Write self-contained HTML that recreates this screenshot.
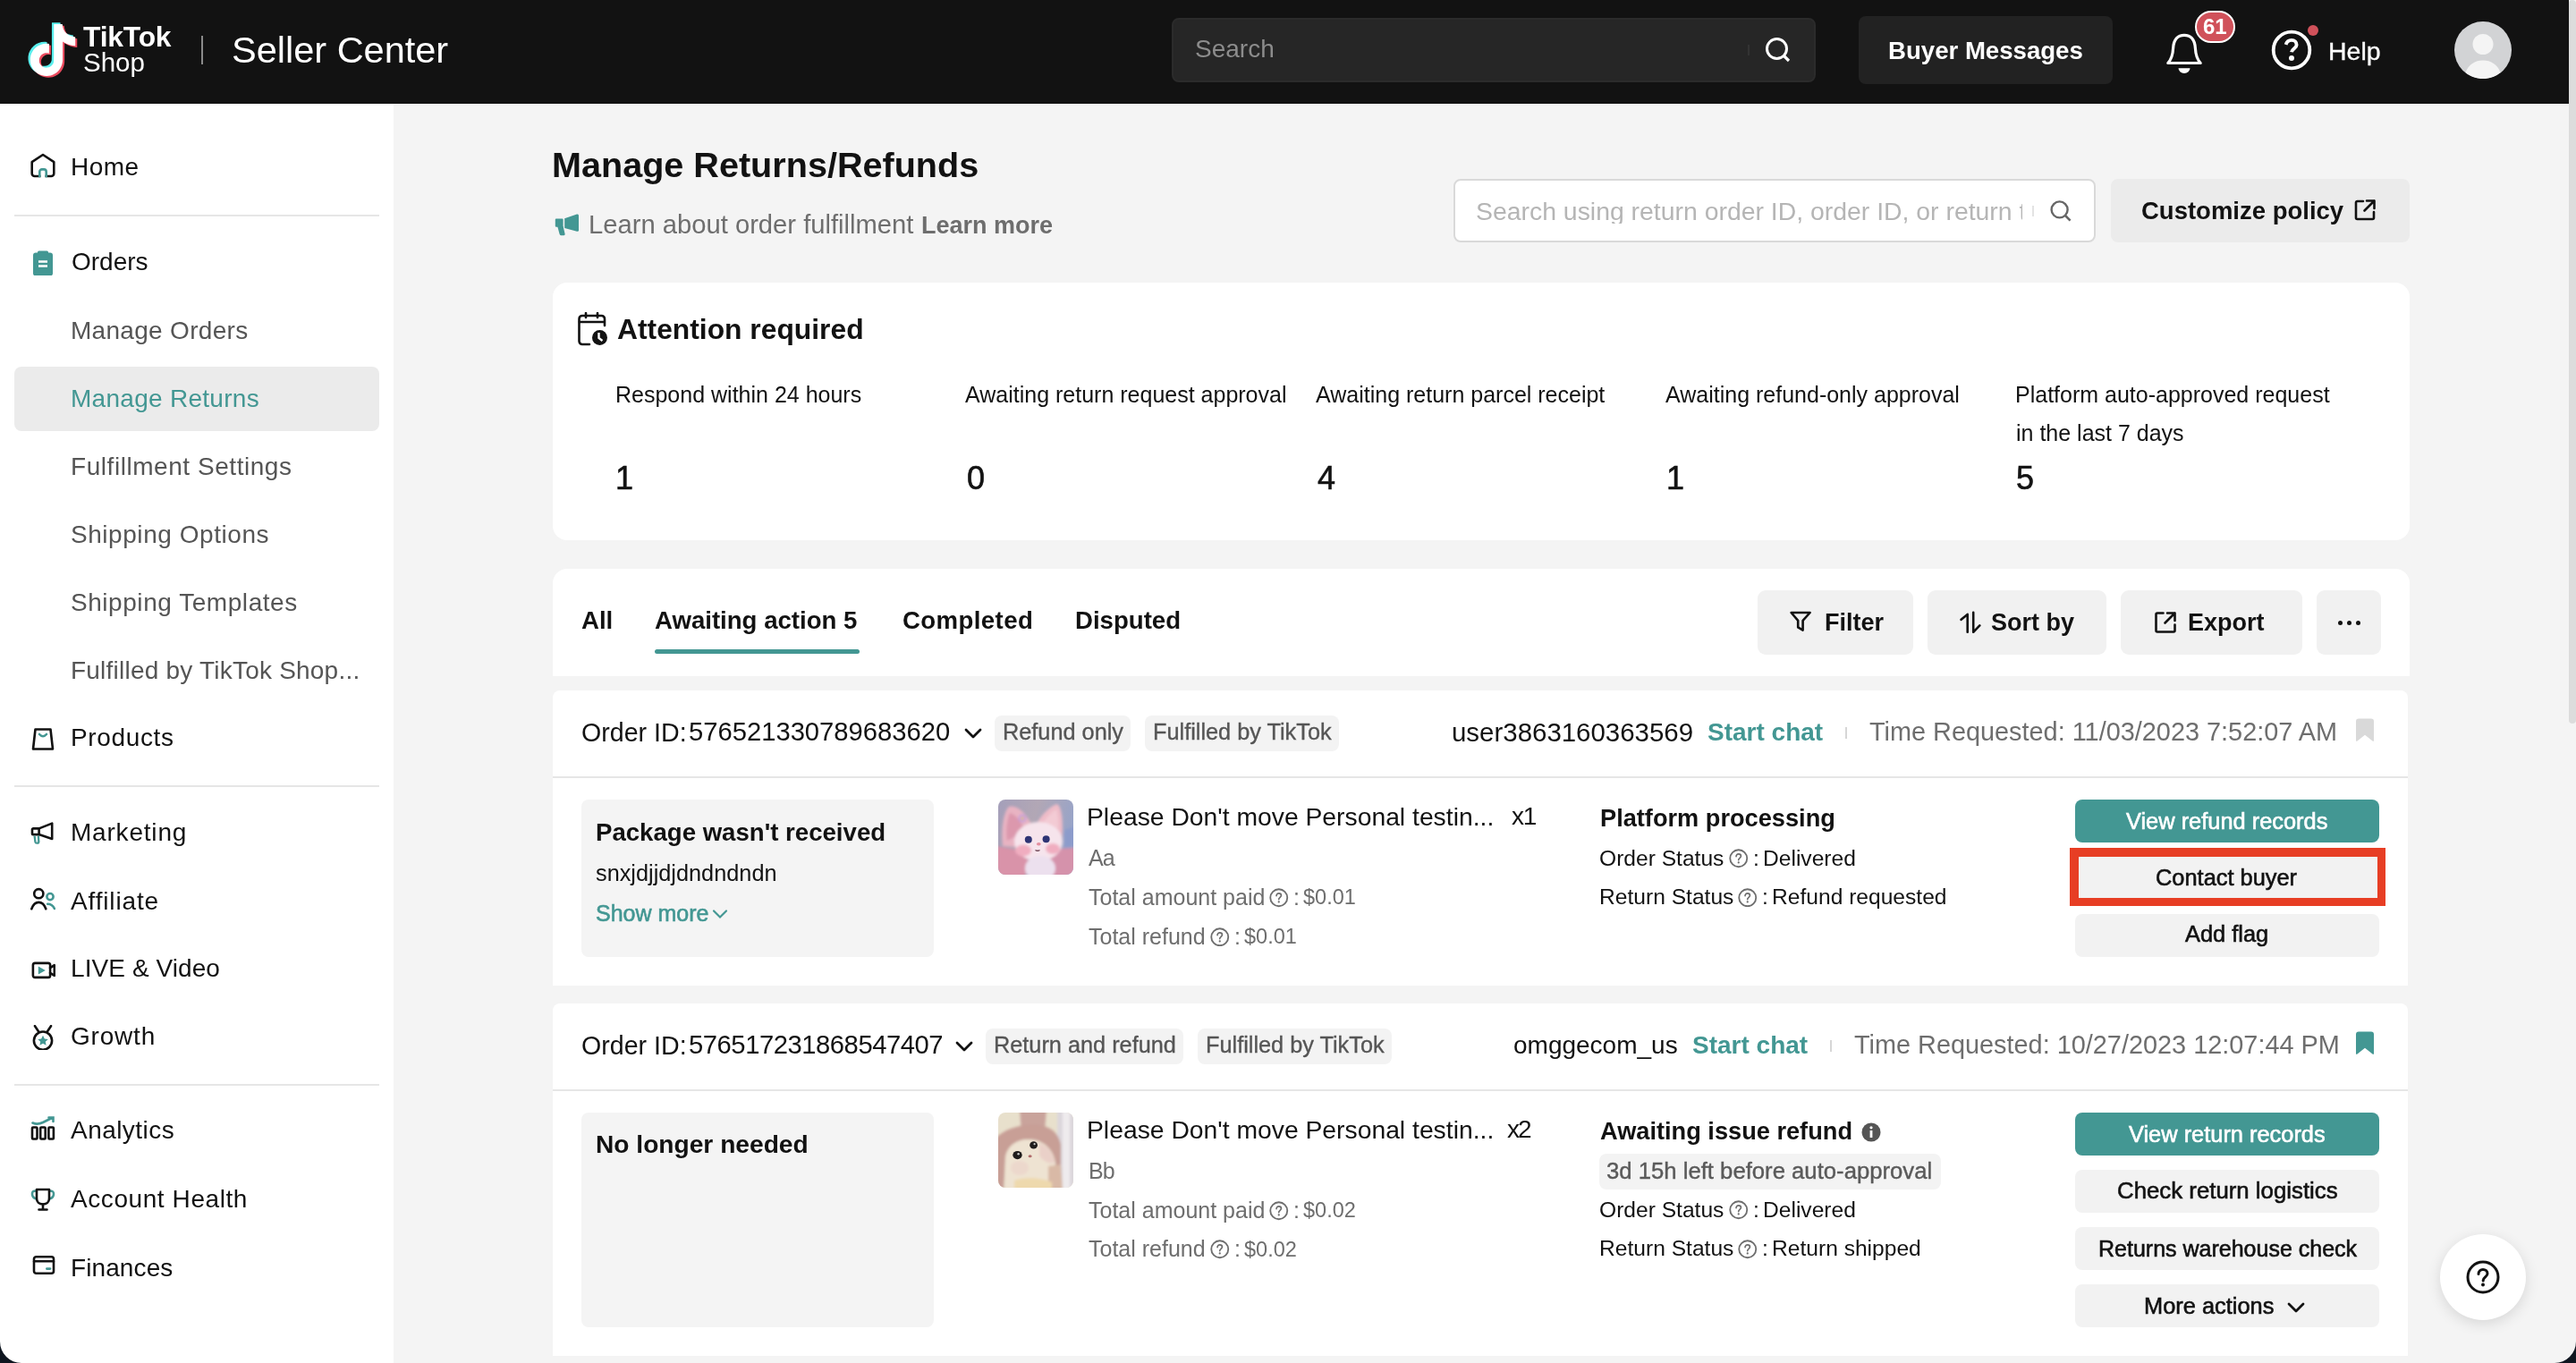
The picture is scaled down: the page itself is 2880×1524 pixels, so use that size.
<!DOCTYPE html>
<html><head><meta charset="utf-8"><title>Manage Returns/Refunds</title>
<style>
html,body{margin:0;padding:0;}
body{width:2880px;height:1524px;position:relative;overflow:hidden;background:#f4f4f4;font-family:"Liberation Sans",sans-serif;}
.t{position:absolute;white-space:nowrap;line-height:1;will-change:transform;}
.b{position:absolute;}
</style></head><body>
<div class="b" style="left:0px;top:0px;width:2872px;height:116px;background:#121212;"></div>
<div class="b" style="left:2872px;top:0px;width:8px;height:1524px;background:#f4f4f4;"></div>
<div class="b" style="left:2872px;top:0px;width:8px;height:809px;background:#dcdcdc;border-radius:4px;"></div>
<div class="b" style="left:0px;top:116px;width:440px;height:1408px;background:#ffffff;"></div>
<svg class="b" style="left:30px;top:24px;" width="58" height="64" viewBox="0 0 24 24"><path d="M12.525.02c1.31-.02 2.61-.01 3.91-.02.08 1.53.63 3.09 1.75 4.17 1.12 1.11 2.7 1.62 4.24 1.79v4.03c-1.44-.05-2.89-.35-4.2-.97-.57-.26-1.1-.59-1.62-.93-.01 2.92.01 5.84-.02 8.75-.08 1.4-.54 2.79-1.35 3.94-1.31 1.92-3.58 3.17-5.91 3.21-1.43.08-2.86-.31-4.08-1.03-2.02-1.19-3.44-3.37-3.65-5.71-.02-.5-.03-1-.01-1.49.18-1.9 1.12-3.72 2.58-4.96 1.66-1.44 3.98-2.13 6.15-1.72.02 1.48-.04 2.96-.04 4.44-.99-.32-2.15-.23-3.02.37-.63.41-1.11 1.04-1.36 1.75-.21.51-.15 1.07-.14 1.61.24 1.64 1.82 3.02 3.5 2.87 1.12-.01 2.19-.66 2.77-1.61.19-.33.4-.67.41-1.06.1-1.79.06-3.57.07-5.36.01-4.03-.01-8.05.02-12.07z" fill="#5aeeed" transform="translate(-0.95,-0.75)"/><path d="M12.525.02c1.31-.02 2.61-.01 3.91-.02.08 1.53.63 3.09 1.75 4.17 1.12 1.11 2.7 1.62 4.24 1.79v4.03c-1.44-.05-2.89-.35-4.2-.97-.57-.26-1.1-.59-1.62-.93-.01 2.92.01 5.84-.02 8.75-.08 1.4-.54 2.79-1.35 3.94-1.31 1.92-3.58 3.17-5.91 3.21-1.43.08-2.86-.31-4.08-1.03-2.02-1.19-3.44-3.37-3.65-5.71-.02-.5-.03-1-.01-1.49.18-1.9 1.12-3.72 2.58-4.96 1.66-1.44 3.98-2.13 6.15-1.72.02 1.48-.04 2.96-.04 4.44-.99-.32-2.15-.23-3.02.37-.63.41-1.11 1.04-1.36 1.75-.21.51-.15 1.07-.14 1.61.24 1.64 1.82 3.02 3.5 2.87 1.12-.01 2.19-.66 2.77-1.61.19-.33.4-.67.41-1.06.1-1.79.06-3.57.07-5.36.01-4.03-.01-8.05.02-12.07z" fill="#ea4a5e" transform="translate(0.85,0.75)"/><path d="M12.525.02c1.31-.02 2.61-.01 3.91-.02.08 1.53.63 3.09 1.75 4.17 1.12 1.11 2.7 1.62 4.24 1.79v4.03c-1.44-.05-2.89-.35-4.2-.97-.57-.26-1.1-.59-1.62-.93-.01 2.92.01 5.84-.02 8.75-.08 1.4-.54 2.79-1.35 3.94-1.31 1.92-3.58 3.17-5.91 3.21-1.43.08-2.86-.31-4.08-1.03-2.02-1.19-3.44-3.37-3.65-5.71-.02-.5-.03-1-.01-1.49.18-1.9 1.12-3.72 2.58-4.96 1.66-1.44 3.98-2.13 6.15-1.72.02 1.48-.04 2.96-.04 4.44-.99-.32-2.15-.23-3.02.37-.63.41-1.11 1.04-1.36 1.75-.21.51-.15 1.07-.14 1.61.24 1.64 1.82 3.02 3.5 2.87 1.12-.01 2.19-.66 2.77-1.61.19-.33.4-.67.41-1.06.1-1.79.06-3.57.07-5.36.01-4.03-.01-8.05.02-12.07z" fill="#fff"/></svg>
<div class="t" style="left:92.5px;top:26.1px;font-size:31.8px;color:#fff;font-weight:700;letter-spacing:-0.2px;">TikTok</div>
<div class="t" style="left:93.0px;top:55.0px;font-size:29.5px;color:#fff;">Shop</div>
<div class="b" style="left:225px;top:40px;width:2px;height:32px;background:#8a8a8a;"></div>
<div class="t" style="left:259.0px;top:35.3px;font-size:41.5px;color:#fff;">Seller Center</div>
<div class="b" style="left:1310px;top:20px;width:720px;height:72px;background:#262626;border-radius:8px;box-sizing:border-box;border:2px solid #2b2b2b;"></div>
<div class="t" style="left:1336.0px;top:41.3px;font-size:28px;color:#8c8c8c;">Search</div>
<div class="b" style="left:1954px;top:50px;width:2px;height:12px;background:#333;"></div>
<svg class="b" style="left:1970px;top:38px;" width="34" height="34" viewBox="0 0 34 34"><circle cx="16.5" cy="16.5" r="11" fill="none" stroke="#fff" stroke-width="3"/><path d="M24.5 24.5 L30 30" stroke="#fff" stroke-width="3.2"/></svg>
<div class="b" style="left:2078px;top:18px;width:284px;height:76px;background:#222222;border-radius:8px;"></div>
<div class="t" style="left:2111.0px;top:43.1px;font-size:27.6px;color:#fff;font-weight:700;">Buyer Messages</div>
<svg class="b" style="left:2418px;top:34px;" width="48" height="52" viewBox="0 0 48 52"><path d="M5.8 36.5 C9.5 32.5 11.2 28.5 11.6 20 C12.1 10 17 5.3 24 5.3 C31 5.3 35.9 10 36.4 20 C36.8 28.5 38.5 32.5 42.2 36.5 Z" fill="none" stroke="#fff" stroke-width="3.2" stroke-linejoin="round"/><path d="M17.5 42.3 h13 a6.5 5.6 0 0 1 -13 0z" fill="#fff"/></svg>
<div class="b" style="left:2454px;top:12px;width:45px;height:36px;background:#d0515a;border-radius:18px;box-sizing:border-box;border:2px solid #fff;"></div>
<div class="t" style="left:2462.5px;top:17.7px;font-size:24px;color:#fff;font-weight:700;">61</div>
<svg class="b" style="left:2536px;top:30px;" width="52" height="52" viewBox="0 0 52 52"><circle cx="26" cy="26" r="20.3" fill="none" stroke="#fff" stroke-width="3.8"/><path d="M19.6 19.8 C20.6 16.7 23 14.9 26 14.9 C29.4 14.9 31.6 17.2 31.6 20.2 C31.6 23.8 26.6 24.4 26 28.2" fill="none" stroke="#fff" stroke-width="3.9"/><circle cx="26" cy="34.9" r="3" fill="#fff"/></svg>
<div class="b" style="left:2580px;top:28px;width:12px;height:12px;background:#d0515a;border-radius:6px;"></div>
<div class="t" style="left:2603.0px;top:42.9px;font-size:28.5px;color:#fff;-webkit-text-stroke:0.3px #fff;">Help</div>
<svg class="b" style="left:2744px;top:24px;" width="64" height="64" viewBox="0 0 64 64"><circle cx="32" cy="32" r="32" fill="#d2d3d5"/><circle cx="32" cy="25.5" r="11.5" fill="#f4f4f4"/><path d="M12.5 57 C16 48 23 43.5 32 43.5 C41 43.5 48 48 51.5 57 C46 61.5 39.5 64 32 64 C24.5 64 18 61.5 12.5 57Z" fill="#f4f4f4"/></svg>
<svg class="b" style="left:34px;top:171px;" width="28" height="28" viewBox="0 0 28 28"><path d="M1.7 10.2 L14 2 L26.3 10.2 V23 a3 3 0 0 1 -3 3 H4.7 a3 3 0 0 1 -3 -3 Z" fill="none" stroke="#121212" stroke-width="2.6" stroke-linejoin="round" stroke-linecap="round"/><rect x="11.4" y="23.5" width="5.2" height="4.5" fill="#fff"/><path d="M10.3 27.2 V21 a2.6 2.6 0 0 1 2.6 -2.6 H15.1 a2.6 2.6 0 0 1 2.6 2.6 V27.2" fill="none" stroke="#439793" stroke-width="2.6"/></svg>
<div class="t" style="left:79.3px;top:173.3px;font-size:28px;color:#121212;letter-spacing:0.5px;">Home</div>
<div class="b" style="left:16px;top:240px;width:408px;height:2px;background:#e6e6e6;"></div>
<svg class="b" style="left:34px;top:280px;" width="28" height="28" viewBox="0 0 28 28"><rect x="3" y="2.5" width="22" height="26" rx="3" fill="#439793"/><rect x="8" y="0.5" width="12" height="4" rx="1.5" fill="#439793"/><path d="M9 12.5 h10 M9 17.5 h10" stroke="#fff" stroke-width="2.4"/></svg>
<div class="t" style="left:79.8px;top:279.3px;font-size:28px;color:#121212;">Orders</div>
<div class="t" style="left:79.3px;top:355.8px;font-size:28px;color:#555555;letter-spacing:0.3px;">Manage Orders</div>
<div class="b" style="left:16px;top:410px;width:408px;height:72px;background:#ebebeb;border-radius:8px;"></div>
<div class="t" style="left:79.3px;top:432.1px;font-size:28px;color:#439793;letter-spacing:0.28px;">Manage Returns</div>
<div class="t" style="left:79.3px;top:508.1px;font-size:28px;color:#555555;letter-spacing:0.55px;">Fulfillment Settings</div>
<div class="t" style="left:79.3px;top:584.0px;font-size:28px;color:#555555;letter-spacing:0.55px;">Shipping Options</div>
<div class="t" style="left:79.3px;top:659.6px;font-size:28px;color:#555555;letter-spacing:0.55px;">Shipping Templates</div>
<div class="t" style="left:79.3px;top:735.6px;font-size:28px;color:#555555;letter-spacing:0.22px;">Fulfilled by TikTok Shop...</div>
<svg class="b" style="left:34px;top:812px;" width="28" height="28" viewBox="0 0 28 28"><path d="M5.5 3.5 H22.5 L25 25.5 H3 Z" fill="none" stroke="#121212" stroke-width="2.6" stroke-linejoin="round" stroke-linecap="round"/><path d="M10 9 Q14 13.5 18 9" fill="none" stroke="#439793" stroke-width="2.6" stroke-linecap="round"/></svg>
<div class="t" style="left:79.3px;top:810.9px;font-size:28px;color:#121212;letter-spacing:0.65px;">Products</div>
<div class="b" style="left:16px;top:878px;width:408px;height:2px;background:#e6e6e6;"></div>
<svg class="b" style="left:34px;top:917px;" width="28" height="28" viewBox="0 0 28 28"><path d="M3.2 9.4 H9.6 L24.2 3.6 V21 L9.6 16.1 H3.2 a1.2 1.2 0 0 1 -1.2 -1.2 V10.6 a1.2 1.2 0 0 1 1.2 -1.2Z" fill="none" stroke="#121212" stroke-width="2.6" stroke-linejoin="round" stroke-linecap="round"/><path d="M9.6 9.4 V16.1" fill="none" stroke="#121212" stroke-width="2.6" stroke-linejoin="round" stroke-linecap="round"/><path d="M4.6 17.6 L5.4 24.2 Q5.7 25.7 7.1 25.7 H7.9 Q9.5 25.7 9.3 24 L8.9 17.6" fill="none" stroke="#439793" stroke-width="2.3" stroke-linejoin="round"/></svg>
<div class="t" style="left:79.3px;top:917.3px;font-size:28px;color:#121212;letter-spacing:0.8px;">Marketing</div>
<svg class="b" style="left:34px;top:991px;" width="28" height="28" viewBox="0 0 28 28"><circle cx="9.3" cy="8.2" r="5.1" fill="none" stroke="#121212" stroke-width="2.6" stroke-linejoin="round" stroke-linecap="round"/><path d="M1.3 25.2 C3 20.6 6 17.9 9.3 17.9 C12.6 17.9 15.6 20.6 17.3 25.2" fill="none" stroke="#121212" stroke-width="2.6" stroke-linejoin="round" stroke-linecap="round"/><circle cx="22" cy="11.6" r="3.6" fill="none" stroke="#439793" stroke-width="2.6" stroke-linecap="round"/><path d="M19.2 19.7 C22.6 19.7 25.4 21.6 26.9 25" fill="none" stroke="#439793" stroke-width="2.6" stroke-linecap="round"/></svg>
<div class="t" style="left:79.3px;top:993.9px;font-size:28px;color:#121212;letter-spacing:0.85px;">Affiliate</div>
<svg class="b" style="left:34px;top:1071px;" width="28" height="28" viewBox="0 0 28 28"><rect x="2.9" y="5.9" width="19.2" height="16" rx="2.2" fill="none" stroke="#121212" stroke-width="2.6" stroke-linejoin="round" stroke-linecap="round"/><path d="M22.1 11.2 L26.8 8.2 V19.8 L22.1 16.8" fill="none" stroke="#121212" stroke-width="2.6" stroke-linejoin="round" stroke-linecap="round"/><path d="M8.8 9.6 L16.8 14 L8.8 18.4 Z" fill="#439793"/></svg>
<div class="t" style="left:79.3px;top:1069.3px;font-size:28px;color:#121212;letter-spacing:0.08px;">LIVE &amp; Video</div>
<svg class="b" style="left:34px;top:1146px;" width="28" height="28" viewBox="0 0 28 28"><path d="M5 1.2 L9 7.2 M23 1.2 L19 7.2" fill="none" stroke="#121212" stroke-width="2.6" stroke-linejoin="round" stroke-linecap="round" stroke-width="2.8"/><circle cx="14" cy="17.6" r="10.1" fill="none" stroke="#121212" stroke-width="2.6" stroke-linejoin="round" stroke-linecap="round"/><g transform="translate(0,1.2)"><path d="M14 10.5 L15.8 14.3 L19.8 14.8 L16.8 17.5 L17.6 21.5 L14 19.5 L10.4 21.5 L11.2 17.5 L8.2 14.8 L12.2 14.3 Z" fill="#439793"/></g></svg>
<div class="t" style="left:79.3px;top:1145.3px;font-size:28px;color:#121212;letter-spacing:0.8px;">Growth</div>
<div class="b" style="left:16px;top:1212px;width:408px;height:2px;background:#e6e6e6;"></div>
<svg class="b" style="left:34px;top:1248px;" width="28" height="28" viewBox="0 0 28 28"><path d="M2.5 7.5 Q8 10 14 7 Q19 4.5 25 1.5 M20.5 1.5 H25.5 V6" fill="none" stroke="#439793" stroke-width="2.6" stroke-linecap="round"/><rect x="2" y="12.5" width="5.5" height="13" rx="1" fill="none" stroke="#121212" stroke-width="2.6" stroke-linejoin="round" stroke-linecap="round"/><rect x="11.2" y="12.5" width="5.5" height="13" rx="1" fill="none" stroke="#121212" stroke-width="2.6" stroke-linejoin="round" stroke-linecap="round"/><rect x="20.4" y="12.5" width="5.5" height="13" rx="1" fill="none" stroke="#121212" stroke-width="2.6" stroke-linejoin="round" stroke-linecap="round"/></svg>
<div class="t" style="left:79.3px;top:1250.3px;font-size:28px;color:#121212;letter-spacing:0.45px;">Analytics</div>
<svg class="b" style="left:34px;top:1328px;" width="28" height="28" viewBox="0 0 28 28"><path d="M6.5 3.5 C3 3.5 2 4.5 2 7 C2 10 3.5 11.5 6.5 12.5 M21.5 3.5 C25 3.5 26 4.5 26 7 C26 10 24.5 11.5 21.5 12.5" fill="none" stroke="#439793" stroke-width="2.6" stroke-linecap="round"/><path d="M7 2 H21 V12 C21 16 18 18.5 14 18.5 C10 18.5 7 16 7 12 Z" fill="none" stroke="#121212" stroke-width="2.6" stroke-linejoin="round" stroke-linecap="round"/><path d="M14 18.5 V24.5 M9.5 24.5 H18.5" fill="none" stroke="#121212" stroke-width="2.6" stroke-linejoin="round" stroke-linecap="round"/></svg>
<div class="t" style="left:79.3px;top:1327.0px;font-size:28px;color:#121212;letter-spacing:0.58px;">Account Health</div>
<svg class="b" style="left:34px;top:1401px;" width="28" height="28" viewBox="0 0 28 28"><rect x="4" y="4.3" width="22" height="18.4" rx="2.5" fill="none" stroke="#121212" stroke-width="2.6" stroke-linejoin="round" stroke-linecap="round"/><path d="M4.2 9.2 H25.8" fill="none" stroke="#121212" stroke-width="2.6" stroke-linejoin="round" stroke-linecap="round"/><path d="M18.3 17.6 H22" fill="none" stroke="#439793" stroke-width="2.6" stroke-linecap="round"/></svg>
<div class="t" style="left:79.3px;top:1403.5px;font-size:28px;color:#121212;letter-spacing:0.1px;">Finances</div>
<div class="t" style="left:616.8px;top:165.0px;font-size:39.6px;color:#121212;font-weight:700;">Manage Returns/Refunds</div>
<svg class="b" style="left:619px;top:238px;" width="30" height="28" viewBox="0 0 30 28"><path d="M2.8 6.4 H9.6 a1 1 0 0 1 1 1 V15.8 H2.8 a1 1 0 0 1 -1 -1 V7.4 a1 1 0 0 1 1 -1Z" fill="#439793"/><path d="M4.2 15 H10.6 L12.6 23.6 Q12.8 25.2 11 25.2 H8.2 Q6.9 25.2 6.6 23.8 Z" fill="#439793"/><path d="M12.2 6.3 L26 1.6 Q28 1.1 28 3.2 V19.2 Q28 21.2 26 20.7 L12.2 16.9 Z" fill="#439793"/></svg>
<div class="t" style="left:657.5px;top:237.1px;font-size:29.2px;color:#6e6e6e;">Learn about order fulfillment</div>
<div class="t" style="left:1029.5px;top:238.9px;font-size:27px;color:#6e6e6e;font-weight:700;">Learn more</div>
<div class="b" style="left:1625px;top:200px;width:718px;height:71px;background:#ffffff;border-radius:8px;box-sizing:border-box;border:2px solid #d9d9d9;"></div>
<div class="t" style="left:1649.5px;top:222.0px;font-size:28.4px;color:#b5b5b5;width:611px;overflow:hidden;">Search using return order ID, order ID, or return t</div>
<div class="b" style="left:2272px;top:230px;width:2px;height:12px;background:#e3e3e3;"></div>
<svg class="b" style="left:2288px;top:222px;" width="30" height="30" viewBox="0 0 30 30"><circle cx="14.6" cy="12.4" r="9" fill="none" stroke="#666" stroke-width="2.4"/><path d="M21 19 L26.6 24.6" stroke="#666" stroke-width="2.6"/></svg>
<div class="b" style="left:2360px;top:200px;width:334px;height:71px;background:#ebebeb;border-radius:8px;"></div>
<div class="t" style="left:2393.5px;top:221.7px;font-size:27.5px;color:#121212;font-weight:700;">Customize policy</div>
<svg class="b" style="left:2631px;top:222px;" width="26" height="26" viewBox="0 0 26 26"><path d="M11 3 H4.5 a1.5 1.5 0 0 0 -1.5 1.5 V21.5 a1.5 1.5 0 0 0 1.5 1.5 H21.5 a1.5 1.5 0 0 0 1.5 -1.5 V15" fill="none" stroke="#121212" stroke-width="2.6" stroke-linejoin="round" stroke-linecap="round"/><path d="M15 2.5 H23.5 V11 M23.5 2.5 L12.5 13.5" fill="none" stroke="#121212" stroke-width="2.6" stroke-linejoin="round" stroke-linecap="round"/></svg>
<div class="b" style="left:618px;top:316px;width:2076px;height:288px;background:#ffffff;border-radius:16px;"></div>
<svg class="b" style="left:645px;top:349px;" width="36" height="38" viewBox="0 0 36 38"><path d="M14 36 H6 a3.5 3.5 0 0 1 -3.5 -3.5 V7.5 a3.5 3.5 0 0 1 3.5 -3.5 H27.5 a3.5 3.5 0 0 1 3.5 3.5 V15" fill="none" stroke="#121212" stroke-width="2.6" stroke-linejoin="round" stroke-linecap="round" stroke-width="3.2"/><path d="M3 11 H30.5 M10 1 V6 M23 1 V6" fill="none" stroke="#121212" stroke-width="2.6" stroke-linejoin="round" stroke-linecap="round" stroke-width="3.2"/><circle cx="25.5" cy="28.5" r="8.5" fill="#121212"/><path d="M24.5 23 V29 L28.5 32" fill="none" stroke="#fff" stroke-width="2.4"/></svg>
<div class="t" style="left:689.8px;top:352.9px;font-size:31.8px;color:#121212;font-weight:700;">Attention required</div>
<div class="t" style="left:688.2px;top:429.2px;font-size:25px;color:#121212;">Respond within 24 hours</div>
<div class="t" style="left:687.5px;top:517.1px;font-size:36px;color:#121212;-webkit-text-stroke:0.6px #121212;">1</div>
<div class="t" style="left:1079.3px;top:429.2px;font-size:25px;color:#121212;">Awaiting return request approval</div>
<div class="t" style="left:1081.1px;top:517.1px;font-size:36px;color:#121212;-webkit-text-stroke:0.6px #121212;">0</div>
<div class="t" style="left:1470.9px;top:429.2px;font-size:25px;color:#121212;">Awaiting return parcel receipt</div>
<div class="t" style="left:1473.4px;top:517.1px;font-size:36px;color:#121212;-webkit-text-stroke:0.6px #121212;">4</div>
<div class="t" style="left:1862.1px;top:429.2px;font-size:25px;color:#121212;">Awaiting refund-only approval</div>
<div class="t" style="left:1862.8px;top:517.1px;font-size:36px;color:#121212;-webkit-text-stroke:0.6px #121212;">1</div>
<div class="t" style="left:2252.9px;top:429.2px;font-size:25px;color:#121212;">Platform auto-approved request</div>
<div class="t" style="left:2254.4px;top:517.1px;font-size:36px;color:#121212;-webkit-text-stroke:0.6px #121212;">5</div>
<div class="t" style="left:2253.5px;top:471.7px;font-size:25px;color:#121212;">in the last 7 days</div>
<div class="b" style="left:618px;top:636px;width:2076px;height:120px;background:#ffffff;border-radius:16px 16px 0 0;"></div>
<div class="t" style="left:650.0px;top:680.2px;font-size:27.6px;color:#121212;font-weight:700;">All</div>
<div class="t" style="left:731.5px;top:680.2px;font-size:27.6px;color:#121212;font-weight:700;">Awaiting action 5</div>
<div class="t" style="left:1009.0px;top:680.2px;font-size:27.6px;color:#121212;font-weight:700;letter-spacing:0.4px;">Completed</div>
<div class="t" style="left:1202.0px;top:680.2px;font-size:27.6px;color:#121212;font-weight:700;">Disputed</div>
<div class="b" style="left:732px;top:726px;width:229px;height:4.5px;background:#439793;border-radius:2.5px;"></div>
<div class="b" style="left:1965px;top:660px;width:174px;height:72px;background:#f1f1f1;border-radius:9px;"></div>
<div class="b" style="left:2155px;top:660px;width:200px;height:72px;background:#f1f1f1;border-radius:9px;"></div>
<div class="b" style="left:2371px;top:660px;width:203px;height:72px;background:#f1f1f1;border-radius:9px;"></div>
<div class="b" style="left:2590px;top:660px;width:72px;height:72px;background:#f1f1f1;border-radius:9px;"></div>
<svg class="b" style="left:1999px;top:682px;" width="28" height="26" viewBox="0 0 28 26"><path d="M3.6 3 H24.6 L16.6 11.8 V22.6 L11.2 19.4 V11.8 Z" fill="none" stroke="#121212" stroke-width="2.6" stroke-linejoin="round" stroke-linecap="round"/></svg>
<div class="t" style="left:2039.5px;top:682.6px;font-size:27px;color:#121212;font-weight:700;">Filter</div>
<svg class="b" style="left:2190px;top:682px;" width="26" height="26" viewBox="0 0 26 26"><path d="M9.7 24.8 V4.9 L2.6 10.8 M16.2 2.8 V24.8 L23.3 17.4" fill="none" stroke="#121212" stroke-width="2.6" stroke-linejoin="round" stroke-linecap="round"/></svg>
<div class="t" style="left:2225.5px;top:682.6px;font-size:27px;color:#121212;font-weight:700;">Sort by</div>
<svg class="b" style="left:2408px;top:683px;" width="26" height="26" viewBox="0 0 26 26"><path d="M10.5 2.5 H4 a1.5 1.5 0 0 0 -1.5 1.5 V22 a1.5 1.5 0 0 0 1.5 1.5 H22 a1.5 1.5 0 0 0 1.5 -1.5 V15.5" fill="none" stroke="#121212" stroke-width="2.6" stroke-linejoin="round" stroke-linecap="round"/><path d="M15 2.5 H23.5 V11 M23.5 2.5 L12.5 13.5" fill="none" stroke="#121212" stroke-width="2.6" stroke-linejoin="round" stroke-linecap="round"/></svg>
<div class="t" style="left:2446.0px;top:682.6px;font-size:27px;color:#121212;font-weight:700;">Export</div>
<div class="b" style="left:2614px;top:694px;width:5px;height:5px;background:#121212;border-radius:2.5px;"></div>
<div class="b" style="left:2624px;top:694px;width:5px;height:5px;background:#121212;border-radius:2.5px;"></div>
<div class="b" style="left:2634px;top:694px;width:5px;height:5px;background:#121212;border-radius:2.5px;"></div>
<div class="b" style="left:618px;top:772px;width:2074px;height:330px;background:#ffffff;border-radius:8px 8px 0 0;"></div>
<div class="b" style="left:618px;top:868px;width:2074px;height:2px;background:#e6e6e6;"></div>
<div class="t" style="left:649.5px;top:804.9px;font-size:28.6px;color:#121212;">Order ID:</div>
<div class="t" style="left:769.5px;top:804.4px;font-size:29.2px;color:#121212;">576521330789683620</div>
<svg class="b" style="left:1078px;top:813px;" width="20" height="14" viewBox="0 0 20 14"><path d="M2 3 L10 11 L18 3" fill="none" stroke="#121212" stroke-width="2.8" stroke-linecap="round" stroke-linejoin="round"/></svg>
<div class="b" style="left:1112px;top:800px;width:152px;height:40px;background:#f3f3f3;border-radius:8px;"></div>
<div class="t" style="left:1120.5px;top:806.2px;font-size:25.3px;color:#555555;-webkit-text-stroke:0.35px #555555;">Refund only</div>
<div class="b" style="left:1280px;top:800px;width:217px;height:40px;background:#f3f3f3;border-radius:8px;"></div>
<div class="t" style="left:1288.5px;top:806.2px;font-size:25.3px;color:#555555;-webkit-text-stroke:0.35px #555555;">Fulfilled by TikTok</div>
<div class="t" style="left:1622.8px;top:803.8px;font-size:29.45px;color:#121212;">user3863160363569</div>
<div class="t" style="left:1909.0px;top:805.0px;font-size:28px;color:#439793;font-weight:700;">Start chat</div>
<div class="b" style="left:2063px;top:813px;width:2px;height:13px;background:#d6d6d6;"></div>
<div class="t" style="left:2089.5px;top:804.3px;font-size:28.87px;color:#6e6e6e;">Time Requested: 11/03/2023 7:52:07 AM</div>
<svg class="b" style="left:2632.5px;top:803.3px;" width="22" height="27" viewBox="0 0 22 27"><path d="M1 3.5 a3 3 0 0 1 3 -3 H18 a3 3 0 0 1 3 3 V24.8 Q21 26.6 19.5 25.6 L11 18.8 L2.5 25.6 Q1 26.6 1 24.8 Z" fill="#d9d9d9"/></svg>
<div class="b" style="left:650px;top:894px;width:394px;height:176px;background:#f4f4f4;border-radius:8px;"></div>
<div class="t" style="left:666.0px;top:916.5px;font-size:27.6px;color:#121212;font-weight:700;">Package wasn&#x27;t received</div>
<div class="t" style="left:666.0px;top:964.4px;font-size:25.3px;color:#121212;">snxjdjjdjdndndndn</div>
<div class="t" style="left:666.0px;top:1008.8px;font-size:25px;color:#439793;-webkit-text-stroke:0.6px #439793;">Show more</div>
<svg class="b" style="left:796px;top:1016px;" width="18" height="12" viewBox="0 0 18 12"><path d="M2 2.5 L9 9.5 L16 2.5" fill="none" stroke="#439793" stroke-width="2.2" stroke-linecap="round"/></svg>
<svg class="b" style="left:1116px;top:894px;" width="84" height="84" viewBox="0 0 84 84"><defs><clipPath id="c1"><rect width="84" height="84" rx="8"/></clipPath><filter id="bl1" x="-10%" y="-10%" width="120%" height="120%"><feGaussianBlur stdDeviation="1.6"/></filter>
<linearGradient id="g1" x1="0" y1="0" x2="1" y2="0.3"><stop offset="0" stop-color="#a49fba"/><stop offset="0.5" stop-color="#b2a7b5"/><stop offset="1" stop-color="#98a4c8"/></linearGradient></defs>
<g clip-path="url(#c1)"><rect width="84" height="84" fill="url(#g1)"/><g filter="url(#bl1)">
<path d="M74 34 L86 30 L86 52 L74 54Z" fill="#8c9bcb"/>
<path d="M5 52 C3 32 6 14 12 8 C20 5 30 14 37 27 L30 54Z" fill="#e8b3c2"/>
<path d="M10 46 C8 36 10 22 13 15 C20 17 26 25 30 35Z" fill="#dc98ad"/>
<path d="M44 25 C50 15 60 6 66 5 C72 9 73 30 71 47 L56 41Z" fill="#eebcc8"/>
<path d="M49 27 C55 19 61 13 65 11 C68 21 68 34 66 42Z" fill="#f3cbd4"/>
<path d="M-2 52 L20 56 L34 68 L30 86 L-2 86Z" fill="#d993a9"/>
<path d="M86 54 L66 55 L56 68 L60 86 L86 86Z" fill="#d592ab"/>
<ellipse cx="45" cy="47" rx="27" ry="22" fill="#f6e4ec"/>
<ellipse cx="47" cy="77" rx="17" ry="14" fill="#ece0ee"/>
<ellipse cx="28" cy="57" rx="9" ry="6.5" fill="#f0adc0"/><ellipse cx="61" cy="55" rx="8" ry="6" fill="#f0adc0"/>
<circle cx="27" cy="21" r="4.5" fill="#c9a0dc"/><circle cx="27" cy="21" r="1.8" fill="#e9c46a"/>
</g>
<circle cx="33.8" cy="44.8" r="4" fill="#2e3474"/><circle cx="53.6" cy="44.3" r="4" fill="#2e3474"/>
<ellipse cx="45.3" cy="49.8" rx="2.4" ry="1.7" fill="#e48f9f"/><path d="M41.5 56.5 Q44 58 46.5 56.5" stroke="#6a4050" stroke-width="1.3" fill="none"/>
</g></svg>
<div class="t" style="left:1214.5px;top:898.8px;font-size:28.3px;color:#121212;">Please Don&#x27;t move Personal testin...</div>
<div class="t" style="left:1689.5px;top:899.1px;font-size:28px;color:#121212;letter-spacing:-1.2px;">x1</div>
<div class="t" style="left:1216.5px;top:946.8px;font-size:25px;color:#6e6e6e;letter-spacing:-0.8px;">Aa</div>
<div class="t" style="left:1216.5px;top:990.8px;font-size:25px;color:#6e6e6e;">Total amount paid</div>
<svg class="b" style="left:1419.25px;top:993.25px;" width="21.5" height="21.5" viewBox="0 0 24 24"><circle cx="12" cy="12" r="10.6" fill="none" stroke="#6e6e6e" stroke-width="2.05"/><path d="M9 9.6 C9 7.7 10.4 6.6 12 6.6 C13.7 6.6 15 7.7 15 9.3 C15 11.3 12.4 11.6 12 13.5 L12 14" fill="none" stroke="#6e6e6e" stroke-width="1.9" stroke-linecap="round"/><circle cx="12" cy="17.2" r="1.25" fill="#6e6e6e"/></svg>
<div class="t" style="left:1446.0px;top:990.8px;font-size:25px;color:#6e6e6e;">:</div>
<div class="t" style="left:1457.0px;top:992.1px;font-size:23.5px;color:#6e6e6e;">$0.01</div>
<div class="t" style="left:1216.5px;top:1035.0px;font-size:25px;color:#6e6e6e;">Total refund</div>
<svg class="b" style="left:1353.25px;top:1036.95px;" width="21.5" height="21.5" viewBox="0 0 24 24"><circle cx="12" cy="12" r="10.6" fill="none" stroke="#6e6e6e" stroke-width="2.05"/><path d="M9 9.6 C9 7.7 10.4 6.6 12 6.6 C13.7 6.6 15 7.7 15 9.3 C15 11.3 12.4 11.6 12 13.5 L12 14" fill="none" stroke="#6e6e6e" stroke-width="1.9" stroke-linecap="round"/><circle cx="12" cy="17.2" r="1.25" fill="#6e6e6e"/></svg>
<div class="t" style="left:1379.5px;top:1035.0px;font-size:25px;color:#6e6e6e;">:</div>
<div class="t" style="left:1390.5px;top:1036.3px;font-size:23.5px;color:#6e6e6e;">$0.01</div>
<div class="t" style="left:1788.5px;top:900.6px;font-size:27.2px;color:#121212;font-weight:700;">Platform processing</div>
<div class="t" style="left:1787.5px;top:947.7px;font-size:24.6px;color:#121212;">Order Status</div>
<svg class="b" style="left:1933.25px;top:949.25px;" width="21.5" height="21.5" viewBox="0 0 24 24"><circle cx="12" cy="12" r="10.6" fill="none" stroke="#6e6e6e" stroke-width="2.05"/><path d="M9 9.6 C9 7.7 10.4 6.6 12 6.6 C13.7 6.6 15 7.7 15 9.3 C15 11.3 12.4 11.6 12 13.5 L12 14" fill="none" stroke="#6e6e6e" stroke-width="1.9" stroke-linecap="round"/><circle cx="12" cy="17.2" r="1.25" fill="#6e6e6e"/></svg>
<div class="t" style="left:1959.5px;top:947.7px;font-size:24.6px;color:#121212;">:</div>
<div class="t" style="left:1970.5px;top:947.7px;font-size:24.6px;color:#121212;">Delivered</div>
<div class="t" style="left:1787.5px;top:990.9px;font-size:24.6px;color:#121212;">Return Status</div>
<svg class="b" style="left:1943.25px;top:992.95px;" width="21.5" height="21.5" viewBox="0 0 24 24"><circle cx="12" cy="12" r="10.6" fill="none" stroke="#6e6e6e" stroke-width="2.05"/><path d="M9 9.6 C9 7.7 10.4 6.6 12 6.6 C13.7 6.6 15 7.7 15 9.3 C15 11.3 12.4 11.6 12 13.5 L12 14" fill="none" stroke="#6e6e6e" stroke-width="1.9" stroke-linecap="round"/><circle cx="12" cy="17.2" r="1.25" fill="#6e6e6e"/></svg>
<div class="t" style="left:1970.0px;top:990.9px;font-size:24.6px;color:#121212;">:</div>
<div class="t" style="left:1980.5px;top:990.9px;font-size:24.6px;color:#121212;">Refund requested</div>
<div class="b" style="left:2320px;top:894px;width:340px;height:48px;background:#439793;border-radius:8px;"></div>
<div class="t" style="left:2377.0px;top:905.5px;font-size:25.4px;color:#fff;-webkit-text-stroke:0.6px #fff;">View refund records</div>
<div class="b" style="left:2314px;top:948px;width:353px;height:65px;background:#e73e24;"></div>
<div class="b" style="left:2323.5px;top:958px;width:334px;height:46px;background:#f2f2f2;"></div>
<div class="t" style="left:2410.0px;top:968.5px;font-size:25.4px;color:#121212;-webkit-text-stroke:0.6px #121212;">Contact buyer</div>
<div class="b" style="left:2320px;top:1022px;width:340px;height:48px;background:#f2f2f2;border-radius:8px;"></div>
<div class="t" style="left:2442.5px;top:1031.8px;font-size:25.4px;color:#121212;-webkit-text-stroke:0.6px #121212;">Add flag</div>
<div class="b" style="left:618px;top:1122px;width:2074px;height:394px;background:#ffffff;border-radius:8px 8px 0 0;"></div>
<div class="b" style="left:618px;top:1218px;width:2074px;height:2px;background:#e6e6e6;"></div>
<div class="t" style="left:649.5px;top:1154.9px;font-size:28.6px;color:#121212;">Order ID:</div>
<div class="t" style="left:769.5px;top:1154.4px;font-size:29.2px;color:#121212;letter-spacing:-0.45px;">576517231868547407</div>
<svg class="b" style="left:1068px;top:1163px;" width="20" height="14" viewBox="0 0 20 14"><path d="M2 3 L10 11 L18 3" fill="none" stroke="#121212" stroke-width="2.8" stroke-linecap="round" stroke-linejoin="round"/></svg>
<div class="b" style="left:1102px;top:1150px;width:221px;height:40px;background:#f3f3f3;border-radius:8px;"></div>
<div class="t" style="left:1110.5px;top:1156.2px;font-size:25.3px;color:#555555;-webkit-text-stroke:0.35px #555555;">Return and refund</div>
<div class="b" style="left:1339px;top:1150px;width:217px;height:40px;background:#f3f3f3;border-radius:8px;"></div>
<div class="t" style="left:1347.5px;top:1156.2px;font-size:25.3px;color:#555555;-webkit-text-stroke:0.35px #555555;">Fulfilled by TikTok</div>
<div class="t" style="left:1691.5px;top:1155.0px;font-size:28px;color:#121212;">omggecom_us</div>
<div class="t" style="left:1891.5px;top:1155.0px;font-size:28px;color:#439793;font-weight:700;">Start chat</div>
<div class="b" style="left:2046px;top:1163px;width:2px;height:13px;background:#d6d6d6;"></div>
<div class="t" style="left:2072.5px;top:1154.3px;font-size:28.87px;color:#6e6e6e;">Time Requested: 10/27/2023 12:07:44 PM</div>
<svg class="b" style="left:2632.5px;top:1153.3px;" width="22" height="27" viewBox="0 0 22 27"><path d="M1 3.5 a3 3 0 0 1 3 -3 H18 a3 3 0 0 1 3 3 V24.8 Q21 26.6 19.5 25.6 L11 18.8 L2.5 25.6 Q1 26.6 1 24.8 Z" fill="#439793"/></svg>
<div class="b" style="left:650px;top:1244px;width:394px;height:240px;background:#f4f4f4;border-radius:8px;"></div>
<div class="t" style="left:666.0px;top:1266.1px;font-size:28.15px;color:#121212;font-weight:700;">No longer needed</div>
<svg class="b" style="left:1116px;top:1244px;" width="84" height="84" viewBox="0 0 84 84"><defs><clipPath id="c2"><rect width="84" height="84" rx="8"/></clipPath><filter id="bl2" x="-10%" y="-10%" width="120%" height="120%"><feGaussianBlur stdDeviation="1.8"/></filter></defs>
<g clip-path="url(#c2)"><rect width="84" height="84" fill="#e8e0cc"/><g filter="url(#bl2)">
<rect x="66" y="-4" width="22" height="92" fill="#dcd7dc"/><rect x="72" y="-4" width="8" height="92" fill="#eeebed"/>
<path d="M24 -4 L54 -4 L52 20 L26 22Z" fill="#c9a39b"/>
<path d="M-4 30 C6 18 28 12 46 14 C60 16 68 24 70 36 L70 60 L62 62 C60 44 50 30 34 30 C20 30 10 38 8 50 L6 86 L-4 86Z" fill="#c89f96"/>
<path d="M8 50 C10 36 22 29 36 30 C52 31 62 42 64 56 L64 86 L8 86Z" fill="#eee3d2"/>
<path d="M46 34 C56 38 62 46 63 56 C56 58 50 54 46 48Z" fill="#ead0c8"/>
<ellipse cx="24" cy="62" rx="10" ry="8" fill="#ecd8cc"/>
<path d="M56 60 L70 58 L72 86 L56 86Z" fill="#d9b9a6"/>
<path d="M18 76 C28 72 48 72 60 78 L60 88 L18 88Z" fill="#eed9ad"/>
</g>
<ellipse cx="39.6" cy="36.4" rx="4.4" ry="4.2" fill="#1f1c1c"/><ellipse cx="21.5" cy="47.6" rx="5.2" ry="4.6" fill="#1f1c1c"/>
<circle cx="40.6" cy="35.2" r="1.1" fill="#ccc"/><circle cx="22.6" cy="46.2" r="1.2" fill="#ccc"/>
<ellipse cx="35.6" cy="48.8" rx="2" ry="1.5" fill="#b06a6a"/>
</g></svg>
<div class="t" style="left:1214.5px;top:1248.8px;font-size:28.3px;color:#121212;">Please Don&#x27;t move Personal testin...</div>
<div class="t" style="left:1685.0px;top:1249.1px;font-size:28px;color:#121212;letter-spacing:-2px;">x2</div>
<div class="t" style="left:1216.5px;top:1296.6px;font-size:25px;color:#6e6e6e;letter-spacing:-0.8px;">Bb</div>
<div class="t" style="left:1216.5px;top:1340.8px;font-size:25px;color:#6e6e6e;">Total amount paid</div>
<svg class="b" style="left:1419.25px;top:1343.25px;" width="21.5" height="21.5" viewBox="0 0 24 24"><circle cx="12" cy="12" r="10.6" fill="none" stroke="#6e6e6e" stroke-width="2.05"/><path d="M9 9.6 C9 7.7 10.4 6.6 12 6.6 C13.7 6.6 15 7.7 15 9.3 C15 11.3 12.4 11.6 12 13.5 L12 14" fill="none" stroke="#6e6e6e" stroke-width="1.9" stroke-linecap="round"/><circle cx="12" cy="17.2" r="1.25" fill="#6e6e6e"/></svg>
<div class="t" style="left:1446.0px;top:1340.8px;font-size:25px;color:#6e6e6e;">:</div>
<div class="t" style="left:1457.0px;top:1342.1px;font-size:23.5px;color:#6e6e6e;">$0.02</div>
<div class="t" style="left:1216.5px;top:1384.4px;font-size:25px;color:#6e6e6e;">Total refund</div>
<svg class="b" style="left:1353.25px;top:1386.35px;" width="21.5" height="21.5" viewBox="0 0 24 24"><circle cx="12" cy="12" r="10.6" fill="none" stroke="#6e6e6e" stroke-width="2.05"/><path d="M9 9.6 C9 7.7 10.4 6.6 12 6.6 C13.7 6.6 15 7.7 15 9.3 C15 11.3 12.4 11.6 12 13.5 L12 14" fill="none" stroke="#6e6e6e" stroke-width="1.9" stroke-linecap="round"/><circle cx="12" cy="17.2" r="1.25" fill="#6e6e6e"/></svg>
<div class="t" style="left:1379.5px;top:1384.4px;font-size:25px;color:#6e6e6e;">:</div>
<div class="t" style="left:1390.5px;top:1385.7px;font-size:23.5px;color:#6e6e6e;">$0.02</div>
<div class="t" style="left:1788.5px;top:1250.6px;font-size:27.2px;color:#121212;font-weight:700;">Awaiting issue refund</div>
<svg class="b" style="left:2081px;top:1255px;" width="22" height="22" viewBox="0 0 22 22"><circle cx="11" cy="11" r="10.5" fill="#555"/><rect x="9.6" y="9" width="2.8" height="8" fill="#fff"/><circle cx="11" cy="5.8" r="1.6" fill="#fff"/></svg>
<div class="b" style="left:1788px;top:1290px;width:382px;height:40px;background:#f3f3f3;border-radius:8px;"></div>
<div class="t" style="left:1796.0px;top:1296.5px;font-size:25.7px;color:#5a5a5a;-webkit-text-stroke:0.4px #5a5a5a;">3d 15h left before auto-approval</div>
<div class="t" style="left:1787.5px;top:1340.8px;font-size:24.6px;color:#121212;">Order Status</div>
<svg class="b" style="left:1933.25px;top:1342.35px;" width="21.5" height="21.5" viewBox="0 0 24 24"><circle cx="12" cy="12" r="10.6" fill="none" stroke="#6e6e6e" stroke-width="2.05"/><path d="M9 9.6 C9 7.7 10.4 6.6 12 6.6 C13.7 6.6 15 7.7 15 9.3 C15 11.3 12.4 11.6 12 13.5 L12 14" fill="none" stroke="#6e6e6e" stroke-width="1.9" stroke-linecap="round"/><circle cx="12" cy="17.2" r="1.25" fill="#6e6e6e"/></svg>
<div class="t" style="left:1959.5px;top:1340.8px;font-size:24.6px;color:#121212;">:</div>
<div class="t" style="left:1970.5px;top:1340.8px;font-size:24.6px;color:#121212;">Delivered</div>
<div class="t" style="left:1787.5px;top:1384.4px;font-size:24.6px;color:#121212;">Return Status</div>
<svg class="b" style="left:1943.25px;top:1386.45px;" width="21.5" height="21.5" viewBox="0 0 24 24"><circle cx="12" cy="12" r="10.6" fill="none" stroke="#6e6e6e" stroke-width="2.05"/><path d="M9 9.6 C9 7.7 10.4 6.6 12 6.6 C13.7 6.6 15 7.7 15 9.3 C15 11.3 12.4 11.6 12 13.5 L12 14" fill="none" stroke="#6e6e6e" stroke-width="1.9" stroke-linecap="round"/><circle cx="12" cy="17.2" r="1.25" fill="#6e6e6e"/></svg>
<div class="t" style="left:1970.0px;top:1384.4px;font-size:24.6px;color:#121212;">:</div>
<div class="t" style="left:1980.5px;top:1384.4px;font-size:24.6px;color:#121212;">Return shipped</div>
<div class="b" style="left:2320px;top:1244px;width:340px;height:48px;background:#439793;border-radius:8px;"></div>
<div class="t" style="left:2379.5px;top:1255.5px;font-size:25.4px;color:#fff;-webkit-text-stroke:0.6px #fff;">View return records</div>
<div class="b" style="left:2320px;top:1308px;width:340px;height:48px;background:#f2f2f2;border-radius:8px;"></div>
<div class="t" style="left:2366.5px;top:1319.2px;font-size:25.8px;color:#121212;-webkit-text-stroke:0.6px #121212;">Check return logistics</div>
<div class="b" style="left:2320px;top:1372px;width:340px;height:48px;background:#f2f2f2;border-radius:8px;"></div>
<div class="t" style="left:2345.5px;top:1383.8px;font-size:25px;color:#121212;-webkit-text-stroke:0.6px #121212;">Returns warehouse check</div>
<div class="b" style="left:2320px;top:1436px;width:340px;height:48px;background:#f2f2f2;border-radius:8px;"></div>
<div class="t" style="left:2397.0px;top:1447.5px;font-size:25.4px;color:#121212;-webkit-text-stroke:0.6px #121212;">More actions</div>
<svg class="b" style="left:2557px;top:1455px;" width="20" height="14" viewBox="0 0 20 14"><path d="M2 3 L10 11 L18 3" fill="none" stroke="#121212" stroke-width="2.8" stroke-linecap="round" stroke-linejoin="round"/></svg>
<div class="b" style="left:2728px;top:1380px;width:96px;height:96px;background:#ffffff;border-radius:48px;box-shadow:0 4px 16px rgba(0,0,0,0.12);"></div>
<svg class="b" style="left:2757px;top:1409px;" width="38" height="38" viewBox="0 0 38 38"><circle cx="19" cy="19" r="17" fill="none" stroke="#121212" stroke-width="3"/><path d="M14 15.5 C14 12.2 16.3 10.5 19 10.5 C21.8 10.5 24 12.3 24 15 C24 18.3 20 18.8 19.2 22.5 L19.2 23" fill="none" stroke="#121212" stroke-width="3" stroke-linecap="round"/><circle cx="19" cy="27.6" r="2" fill="#121212"/></svg>
<svg class="b" style="left:0px;top:1500px;" width="24" height="24" viewBox="0 0 24 24"><path d="M0 0 V24 H24 A24 24 0 0 1 0 0Z" fill="#0f1620"/></svg>
<svg class="b" style="left:2856px;top:1500px;" width="24" height="24" viewBox="0 0 24 24"><path d="M24 0 V24 H0 A24 24 0 0 0 24 0Z" fill="#0f1620"/></svg>
</body></html>
